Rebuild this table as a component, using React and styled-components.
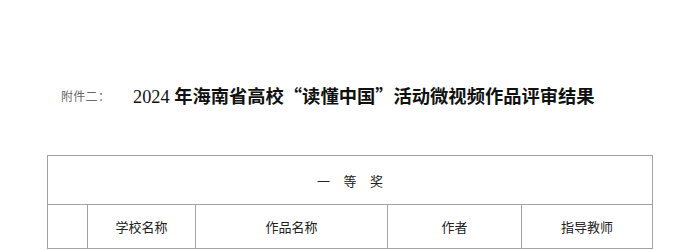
import React from 'react'
import styled, { createGlobalStyle } from 'styled-components'

const GlobalStyle = createGlobalStyle`
    body {
        margin: 0;
        background: #fff;
        font-family: 'Noto Sans CJK SC', sans-serif;
    }
`

const columns = [
    { label: '', width: 40 },
    { label: '学校名称', width: 108 },
    { label: '作品名称', width: 192 },
    { label: '作者', width: 134 },
    { label: '指导教师', width: 131 },
]

const App = () => {
    return (
        <Page>
            <GlobalStyle />
            <TitleRow>
                <Attachment>附件二：</Attachment>
                <Title>
                    <Year>2024 </Year>年海南省高校“读懂中国”活动微视频作品评审结果
                </Title>
            </TitleRow>
            <Table>
                <colgroup>
                    {columns.map((c, i) => <col key={i} style={{ width: c.width }} />)}
                </colgroup>
                <tbody>
                    <tr>
                        <PrizeCell colSpan={5}>一等奖</PrizeCell>
                    </tr>
                    <tr>
                        {columns.map((c, i) => <HeadCell key={i}>{c.label}</HeadCell>)}
                    </tr>
                </tbody>
            </Table>
        </Page>
    )
}

export default App

const Page = styled.div`
    width: 700px;
    height: 250px;
    overflow: hidden;
    padding-top: 80px;
    box-sizing: border-box;
`

const TitleRow = styled.div`
    display: flex;
    align-items: center;
    height: 30px;
    padding-left: 61px;
`

const Attachment = styled.span`
    width: 72px;
    font-size: 12px;
    color: #666;
    letter-spacing: 0.3px;
    font-family: 'Noto Sans CJK SC', sans-serif;
`

const Title = styled.h1`
    margin: 0;
    font-size: 18.3px;
    font-weight: 700;
    color: #111;
    font-family: 'Noto Sans CJK SC', sans-serif;
    white-space: nowrap;
`

const Year = styled.span`
    font-weight: 400;
    font-family: 'Liberation Serif', serif;
`

const Table = styled.table`
    margin: 45px 0 0 47px;
    border-collapse: collapse;
    table-layout: fixed;
    width: 606px;
    color: #222;
    font-size: 13px;

    td {
        border: 1px solid #a3a3a3;
        padding: 0;
        text-align: center;
    }
`

const PrizeCell = styled.td`
    height: 48px;
    letter-spacing: 13.5px;
    text-indent: 13.5px;
`

const HeadCell = styled.td`
    height: 43px;
`
